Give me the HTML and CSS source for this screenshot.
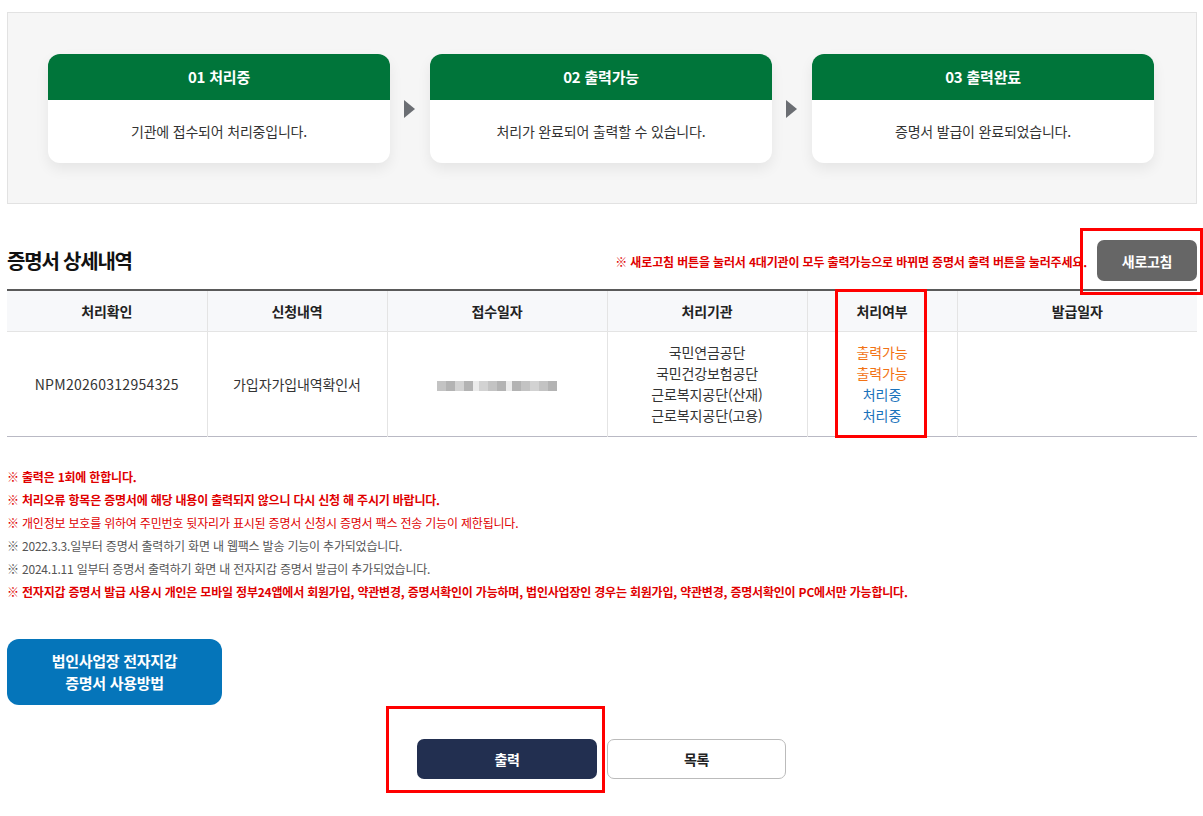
FILE: index.html
```html
<!DOCTYPE html>
<html lang="ko">
<head>
<meta charset="utf-8">
<title>증명서 상세내역</title>
<link rel="stylesheet" href="styles.css">
</head>
<body>
<div class="page">
  <section class="steps">
    <div class="step">
      <div class="step-head">01 처리중</div>
      <div class="step-body">기관에 접수되어 처리중입니다.</div>
    </div>
    <div class="arrow"></div>
    <div class="step">
      <div class="step-head">02 출력가능</div>
      <div class="step-body">처리가 완료되어 출력할 수 있습니다.</div>
    </div>
    <div class="arrow"></div>
    <div class="step">
      <div class="step-head">03 출력완료</div>
      <div class="step-body">증명서 발급이 완료되었습니다.</div>
    </div>
  </section>

  <div class="title-row">
    <h2 class="title">증명서 상세내역</h2>
    <div class="title-right">
      <span class="notice">※ 새로고침 버튼을 눌러서 4대기관이 모두 출력가능으로 바뀌면 증명서 출력 버튼을 눌러주세요.</span>
      <button class="btn-refresh">새로고침</button>
      <span class="mark mark-refresh"></span>
    </div>
  </div>

  <table class="detail">
    <colgroup>
      <col style="width:200px"><col style="width:180px"><col style="width:220px"><col style="width:200px"><col style="width:150px"><col>
    </colgroup>
    <thead>
      <tr>
        <th>처리확인</th><th>신청내역</th><th>접수일자</th><th>처리기관</th><th class="status-col">처리여부<span class="mark mark-status"></span></th><th>발급일자</th>
      </tr>
    </thead>
    <tbody>
      <tr>
        <td class="num">NPM20260312954325</td>
        <td>가입자가입내역확인서</td>
        <td><span class="blur"><i></i><i></i><i></i><i></i><i class="gap"></i><i></i><i></i><i></i><i class="gap"></i><i></i><i></i><i></i><i></i><i></i></span></td>
        <td class="lines">국민연금공단<br>국민건강보험공단<br>근로복지공단(산재)<br>근로복지공단(고용)</td>
        <td class="lines"><span class="ok">출력가능</span><br><span class="ok">출력가능</span><br><span class="ing">처리중</span><br><span class="ing">처리중</span></td>
        <td></td>
      </tr>
    </tbody>
  </table>

  <ul class="notes">
    <li class="red bold">※ 출력은 1회에 한합니다.</li>
    <li class="red bold">※ 처리오류 항목은 증명서에 해당 내용이 출력되지 않으니 다시 신청 해 주시기 바랍니다.</li>
    <li class="red">※ 개인정보 보호를 위하여 주민번호 뒷자리가 표시된 증명서 신청시 증명서 팩스 전송 기능이 제한됩니다.</li>
    <li class="grey">※ 2022.3.3.일부터 증명서 출력하기 화면 내 웹팩스 발송 기능이 추가되었습니다.</li>
    <li class="grey">※ 2024.1.11 일부터 증명서 출력하기 화면 내 전자지갑 증명서 발급이 추가되었습니다.</li>
    <li class="red bold">※ 전자지갑 증명서 발급 사용시 개인은 모바일 정부24앱에서 회원가입, 약관변경, 증명서확인이 가능하며, 법인사업장인 경우는 회원가입, 약관변경, 증명서확인이 PC에서만 가능합니다.</li>
  </ul>

  <button class="btn-guide">법인사업장 전자지갑<br>증명서 사용방법</button>

  <div class="actions">
    <div class="print-wrap">
      <button class="btn-print">출력</button>
      <span class="mark mark-print"></span>
    </div>
    <button class="btn-list">목록</button>
  </div>
</div>
</body>
</html>
```

FILE: styles.css
```css
* { box-sizing: border-box; }
body {
  margin: 0;
  background: #fff;
  font-family: "Noto Sans CJK KR", "Noto Sans", sans-serif;
  color: #333;
}
.page {
  padding: 12px 7px 20px 7px;
  width: 1203px;
}
.steps {
  display: flex;
  align-items: center;
  justify-content: flex-start;
  padding-left: 40px;
  height: 192px;
  background: #f6f6f6;
  border: 1px solid #e2e2e2;
  width: 1190px;
}
.step {
  width: 342px;
  height: 109px;
  flex: 0 0 342px;
  background: #fff;
  border-radius: 12px;
  overflow: hidden;
  box-shadow: 0 6px 14px rgba(0,0,0,0.07);
}
.step-head {
  height: 46px;
  background: #00753a;
  color: #fff;
  font-weight: 700;
  font-size: 15px;
  letter-spacing: -0.2px;
  display: flex;
  align-items: center;
  justify-content: center;
}
.step-body {
  height: 63px;
  display: flex;
  align-items: center;
  justify-content: center;
  font-size: 14px;
  letter-spacing: -0.2px;
  color: #333;
  padding-bottom: 1px;
}
.arrow {
  width: 40px;
  flex: 0 0 40px;
  display: flex;
  justify-content: flex-start;
  padding-left: 14px;
  align-self: center;
  height: 20px;
}
.arrow::before {
  content: "";
  width: 0; height: 0;
  border-top: 9px solid transparent;
  border-bottom: 9px solid transparent;
  border-left: 11px solid #6b6e73;
  margin-top: 2px;
}

.title-row {
  display: flex;
  align-items: center;
  justify-content: space-between;
  margin-top: 36px;
  height: 41px;
  width: 1190px;
}
.title {
  margin: 0;
  font-size: 20px;
  font-weight: 700;
  letter-spacing: -1.2px;
  color: #111;
}
.title-right {
  display: flex;
  align-items: center;
  position: relative;
}
.notice {
  color: #e00000;
  font-size: 12px;
  font-weight: 700;
  letter-spacing: -0.15px;
  margin-right: 10px;
  padding-top: 1px;
}
.btn-refresh {
  width: 100px;
  height: 41px;
  border: 0;
  border-radius: 7px;
  background: #666;
  color: #fff;
  font-family: inherit;
  font-size: 14px;
  font-weight: 700;
  letter-spacing: -0.3px;
}
.mark {
  position: absolute;
  border: 3px solid #ff0000;
  pointer-events: none;
}
.mark-refresh {
  right: -6px;
  top: -12px;
  width: 123px;
  height: 67px;
}

.detail {
  width: 1190px;
  margin-top: 8px;
  border-collapse: collapse;
  table-layout: fixed;
  border-top: 2px solid #5a5a5a;
  border-bottom: 1px solid #b9b9c4;
  font-size: 14px;
  letter-spacing: -0.1px;
}
.detail th {
  height: 41px;
  background: #f7f8fa;
  font-weight: 700;
  color: #222;
  border-left: 1px solid #e4e4e4;
  border-bottom: 1px solid #e4e4e4;
  font-size: 14px;
  padding: 0;
}
.detail td {
  height: 105px;
  text-align: center;
  border-left: 1px solid #e4e4e4;
  color: #333;
  padding: 0;
}
.detail td.num { letter-spacing: 0.3px; }
.detail th:first-child, .detail td:first-child { border-left: 0; }
.detail td.lines { line-height: 21px; }
.status-col { position: relative; }
.mark-status {
  left: 27px;
  top: -2px;
  width: 92px;
  height: 149px;
}
.ok { color: #f27314; }
.ing { color: #1a73bb; }
.blur {
  display: inline-flex;
  height: 10px;
  vertical-align: middle;
  opacity: 0.75;
}
.blur i {
  display: block;
  width: 9px;
  height: 10px;
  background: #b0b0b0;
}
.blur i:nth-child(2n) { background: #9a9a9a; }
.blur i:nth-child(3n) { background: #c4c4c4; }
.blur i.gap { width: 6px; background: #e6e6e6; }

.notes {
  list-style: none;
  margin: 28px 0 0 0;
  padding: 0;
  font-size: 12px;
  letter-spacing: -0.2px;
}
.notes li {
  height: 23px;
  line-height: 23px;
  white-space: nowrap;
}
.notes .red { color: #e00000; }
.notes .grey { color: #555; }
.notes .bold { font-weight: 700; }

.btn-guide {
  display: block;
  margin-top: 36px;
  width: 215px;
  height: 66px;
  border: 0;
  border-radius: 12px;
  background: #0575ba;
  color: #fff;
  font-family: inherit;
  font-size: 15px;
  font-weight: 700;
  letter-spacing: -0.3px;
  line-height: 22px;
}

.actions {
  display: flex;
  justify-content: center;
  align-items: center;
  gap: 10px;
  margin-top: 34px;
}
.print-wrap { position: relative; }
.btn-print, .btn-list {
  width: 180px;
  height: 40px;
  border-radius: 7px;
  font-family: inherit;
  font-size: 14px;
  font-weight: 700;
  letter-spacing: -0.3px;
}
.btn-print {
  border: 0;
  background: #222f50;
  color: #fff;
}
.btn-list {
  background: #fff;
  border: 1px solid #bbb;
  color: #222;
  width: 179px;
}
.mark-print {
  left: -31px;
  top: -33px;
  width: 219px;
  height: 87px;
}
```
